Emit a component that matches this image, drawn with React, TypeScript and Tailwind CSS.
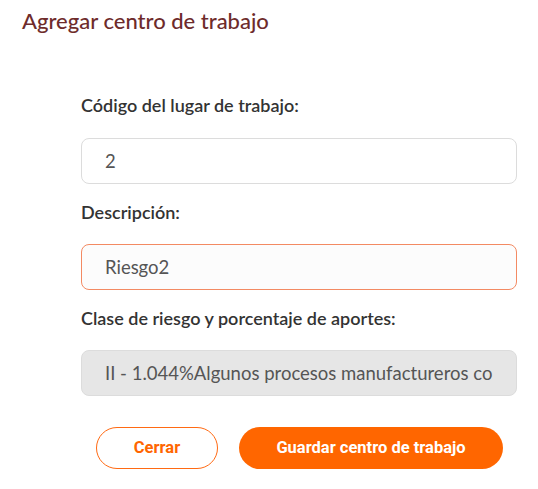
export default function App() {
  return (
    <div className="h-[489px] w-[538px] bg-white font-['Lato',sans-serif]">
      <h2 className="px-[22px] pt-[6px] text-[22px] font-medium leading-[30px] text-[#6e2b2b]">
        Agregar centro de trabajo
      </h2>

      <form className="ml-[81px] mr-[21px] mt-[57px]">
        <label className="block text-[18px] font-semibold leading-[24px] text-[#333]">
          Código del lugar de trabajo:
        </label>
        <input
          defaultValue="2"
          className="mt-[21px] block h-[46px] w-full rounded-[8px] border border-[#dcdcdc] bg-white px-[23px] text-[18.5px] text-[#555] outline-none"
        />

        <label className="mt-[16px] block text-[18px] font-semibold leading-[24px] text-[#333]">
          Descripción:
        </label>
        <input
          defaultValue="Riesgo2"
          className="mt-[20px] block h-[46px] w-full rounded-[8px] border border-[#f38a63] bg-[#fcfcfc] px-[23px] text-[18.5px] text-[#555] outline-none"
        />

        <label className="mt-[16px] block text-[18px] font-semibold leading-[24px] text-[#333]">
          Clase de riesgo y porcentaje de aportes:
        </label>
        <input
          disabled
          defaultValue="II - 1.044%Algunos procesos manufactureros con riesgo"
          className="mt-[20px] block h-[46px] w-full rounded-[8px] border border-[#dcdcdc] bg-[#e6e6e6] px-[23px] text-[18.5px] text-[#555] outline-none"
        />

        <div className="mt-[31px] flex gap-[21px] pl-[15px] font-['Roboto',sans-serif]">
          <button
            type="button"
            className="h-[42px] w-[122px] rounded-full border border-[#ff6a13] bg-white text-[16.5px] font-bold text-[#ff6600]"
          >
            Cerrar
          </button>
          <button
            type="button"
            className="h-[42px] w-[264px] rounded-full bg-[#ff6600] text-[16.5px] font-bold text-white"
          >
            Guardar centro de trabajo
          </button>
        </div>
      </form>
    </div>
  );
}
